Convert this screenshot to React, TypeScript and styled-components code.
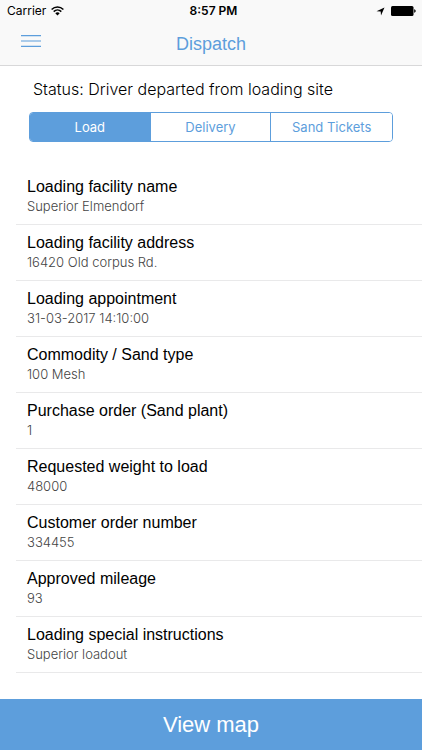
import React, { useState } from "react";
import styled, { createGlobalStyle } from "styled-components";

const blue = "#5d9edc";
const sans = `"Liberation Sans", Arial, sans-serif`;

const GlobalStyle = createGlobalStyle`
  *, *::before, *::after { box-sizing: border-box; }
  body { margin: 0; background: #fff; color: #000; font-family: ${sans}; }
  button { font: inherit; border: 0; margin: 0; padding: 0; background: none; cursor: pointer; }
`;

const Screen = styled.div`
  display: flex;
  flex-direction: column;
  min-height: 100vh;
`;

const Header = styled.header`
  background: #f9f9f9;
  border-bottom: 1px solid #d8d8d9;
`;

const StatusBar = styled.div`
  display: grid;
  grid-template-columns: 1fr auto 1fr;
  align-items: center;
  height: 22px;
  padding: 0 6px 0 7px;
  font: 12px/22px Inter, ${sans};
`;

const StatusGroup = styled.div<{ $end?: boolean }>`
  display: flex;
  align-items: center;
  gap: ${(p) => (p.$end ? 6 : 5)}px;
  justify-content: ${(p) => (p.$end ? "flex-end" : "flex-start")};
`;

const Clock = styled.time`
  padding-left: 4px;
  font-weight: 600;
`;

const NavBar = styled.nav`
  display: grid;
  grid-template-columns: 1fr auto 1fr;
  align-items: center;
  height: 43px;
  padding: 0 20px;
`;

const MenuButton = styled.button`
  display: flex;
  justify-self: start;
  padding-bottom: 6px;
`;

const Title = styled.h1`
  margin: 0;
  color: ${blue};
  font-size: 18px;
  font-weight: 400;
  line-height: 24px;
`;

const Main = styled.main`
  flex: 1;
  padding-bottom: 26px;
`;

const Status = styled.p`
  margin: 0;
  padding: 12px 33px 0;
  font: 300 16px/22px Inter, ${sans};
`;

const Segments = styled.div`
  display: grid;
  grid-template-columns: repeat(3, 1fr);
  height: 30px;
  margin: 12px 29px 27px;
  border: 1px solid ${blue};
  border-radius: 4px;
  overflow: hidden;
`;

const Segment = styled.button<{ $active: boolean }>`
  && {
    font: 13px/28px Inter, ${sans};
    color: ${(p) => (p.$active ? "#fff" : blue)};
    background: ${(p) => (p.$active ? blue : "#fff")};
  }
  &&:not(:last-child) {
    border-right: 1px solid ${blue};
  }
`;

const Details = styled.dl`
  margin: 0 0 0 16px;
`;

const Row = styled.div`
  height: 56px;
  padding: 8px 11px 0;
  border-bottom: 1px solid #e9e9ea;
`;

const Label = styled.dt`
  font-size: 16px;
  line-height: 20px;
`;

const Value = styled.dd`
  margin: 0;
  font: 300 13px/18px Inter, ${sans};
  color: #444;
`;

const MapButton = styled.button`
  && {
    height: 51px;
    background: ${blue};
    color: #fff;
    font-size: 22px;
    line-height: 51px;
  }
`;

const tabs = ["Load", "Delivery", "Sand Tickets"];

const details = [
  ["Loading facility name", "Superior Elmendorf"],
  ["Loading facility address", "16420 Old corpus Rd."],
  ["Loading appointment", "31-03-2017 14:10:00"],
  ["Commodity / Sand type", "100 Mesh"],
  ["Purchase order (Sand plant)", "1"],
  ["Requested weight to load", "48000"],
  ["Customer order number", "334455"],
  ["Approved mileage", "93"],
  ["Loading special instructions", "Superior loadout"],
];

const WifiIcon = () => (
  <svg width="13" height="10" viewBox="0 0 13 10" aria-hidden="true">
    <g fill="none" stroke="#000" strokeWidth="1.5">
      <path d="M.6 3.5C4 .1 9 .1 12.400 3.500" />
      <path d="M2.700 5.600C4.900 3.500 8.100 3.500 10.300 5.600" />
    </g>
    <path d="M4.300 7.200C5.600 6 7.400 6 8.700 7.200L6.500 9.500Z" />
  </svg>
);

const LocationIcon = () => (
  <svg width="9" height="9" viewBox="0 0 9 9" aria-hidden="true">
    <path d="M8.500 .5L5 8.500L4.700 4.500L.5 4.200Z" />
  </svg>
);

const BatteryIcon = () => (
  <svg width="25" height="10" viewBox="0 0 25 10" aria-hidden="true">
    <rect width="22.500" height="10" rx="1.500" />
    <path d="M23.200 3.300C25.200 3.700 25.200 6.300 23.200 6.700Z" />
  </svg>
);

const MenuIcon = () => (
  <svg width="22" height="12" viewBox="0 0 22 12" aria-hidden="true">
    <path d="M1 .7H21M1 6H21M1 11.300H21" stroke={blue} strokeWidth="1.200" />
  </svg>
);

export default function App() {
  const [active, setActive] = useState("Load");
  return (
    <Screen>
      <GlobalStyle />
      <Header>
        <StatusBar>
          <StatusGroup>
            Carrier
            <WifiIcon />
          </StatusGroup>
          <Clock>8:57 PM</Clock>
          <StatusGroup $end>
            <LocationIcon />
            <BatteryIcon />
          </StatusGroup>
        </StatusBar>
        <NavBar>
          <MenuButton type="button" aria-label="Menu">
            <MenuIcon />
          </MenuButton>
          <Title>Dispatch</Title>
        </NavBar>
      </Header>
      <Main>
        <Status>Status: Driver departed from loading site</Status>
        <Segments role="group" aria-label="Dispatch sections">
          {tabs.map((tab) => (
            <Segment
              key={tab}
              type="button"
              $active={tab === active}
              aria-pressed={tab === active}
              onClick={() => setActive(tab)}
            >
              {tab}
            </Segment>
          ))}
        </Segments>
        <Details>
          {details.map(([label, value]) => (
            <Row key={label}>
              <Label>{label}</Label>
              <Value>{value}</Value>
            </Row>
          ))}
        </Details>
      </Main>
      <MapButton type="button">View map</MapButton>
    </Screen>
  );
}
